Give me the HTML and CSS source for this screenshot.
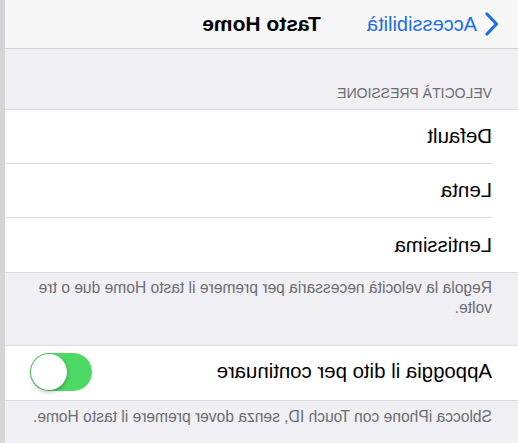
FILE: index.html
```html
<!DOCTYPE html>
<html lang="it">
<head>
    <meta charset="UTF-8">
    <meta name="viewport" content="width=device-width, initial-scale=1.0">
    <title>Tasto Home</title>
    <link rel="stylesheet" href="styles.css">
</head>
<body>
    <div class="screen">
        <div class="page">
            <header class="nav">
                <a class="back" href="#">
                    <svg class="chevron" width="14" height="24" viewBox="0 0 14 24">
                        <path d="M12 2 L2.5 12 L12 22" fill="none" stroke="#1d6ee8" stroke-width="3.2" stroke-linecap="round" stroke-linejoin="round"/>
                    </svg>
                    <span>Accessibilità</span>
                </a>
                <h1 class="title">Tasto Home</h1>
            </header>

            <div class="group-header">VELOCITÀ PRESSIONE</div>
            <ul class="list">
                <li class="row">Default</li>
                <li class="row">Lenta</li>
                <li class="row">Lentissima</li>
            </ul>
            <p class="group-footer">Regola la velocità necessaria per premere il tasto Home due o tre volte.</p>

            <ul class="list">
                <li class="row row-switch">
                    <span>Appoggia il dito per continuare</span>
                    <span class="switch on"><span class="knob"></span></span>
                </li>
            </ul>
            <p class="group-footer small">Sblocca iPhone con Touch ID, senza dover premere il tasto Home.</p>
        </div>
        <div class="edge"></div>
    </div>
</body>
</html>
```

FILE: styles.css
```css
body {
    margin: 0;
    font-family: "Liberation Sans", Arial, sans-serif;
    background: #efeff4;
    overflow: hidden;
}
/* lo screenshot e' specchiato */
.screen {
    display: flex;
    width: 518px;
    height: 443px;
    overflow: hidden;
    transform: scaleX(-1);
}
.page {
    flex: 1;
    background: #efeff4;
}
.edge {
    width: 5px;
    background: #d5d5d7;
}

.nav {
    position: relative;
    height: 48px;
    background: #f7f7f8;
    border-bottom: 1px solid #d2d2d6;
    display: flex;
    align-items: center;
}
.back {
    display: flex;
    align-items: center;
    gap: 8px;
    padding-left: 19px;
    color: #1d6ee8;
    text-decoration: none;
    font-size: 20px;
}
.chevron {
    display: block;
}
.title {
    position: absolute;
    left: 0;
    right: 0;
    margin: 0;
    text-align: center;
    font-size: 21px;
    font-weight: bold;
    color: #000;
    pointer-events: none;
}

.group-header {
    height: 60px;
    box-sizing: border-box;
    display: flex;
    align-items: flex-end;
    padding: 0 26px 8px;
    font-size: 14px;
    color: #6d6d72;
}

.list {
    list-style: none;
    margin: 0;
    padding: 0 0 0 26px;
    background: #fff;
    border-top: 1px solid #dcdce0;
    border-bottom: 1px solid #dcdce0;
}
.row {
    height: 53px;
    display: flex;
    align-items: center;
    font-size: 20.4px;
    color: #000;
    border-bottom: 1px solid #dcdce0;
}
.row:last-child {
    border-bottom: none;
    height: 54px;
}
.row-switch {
    justify-content: space-between;
    padding-right: 25px;
    padding-bottom: 3px;
    box-sizing: border-box;
}

.switch {
    width: 62px;
    height: 38px;
    border-radius: 19px;
    background: #4cd964;
    display: flex;
    align-items: center;
    justify-content: flex-end;
    padding: 1px;
    box-sizing: border-box;
}
.knob {
    width: 36px;
    height: 36px;
    border-radius: 50%;
    background: #fff;
    box-shadow: 0 2px 4px rgba(0, 0, 0, 0.25), 0 0 1px rgba(0, 0, 0, 0.2);
}

.group-footer {
    margin: 0;
    height: 72px;
    box-sizing: border-box;
    padding: 5px 20px 0 26px;
    font-size: 15.6px;
    line-height: 20px;
    color: #6d6d72;
}
.group-footer.small {
    padding-top: 6px;
}
```
